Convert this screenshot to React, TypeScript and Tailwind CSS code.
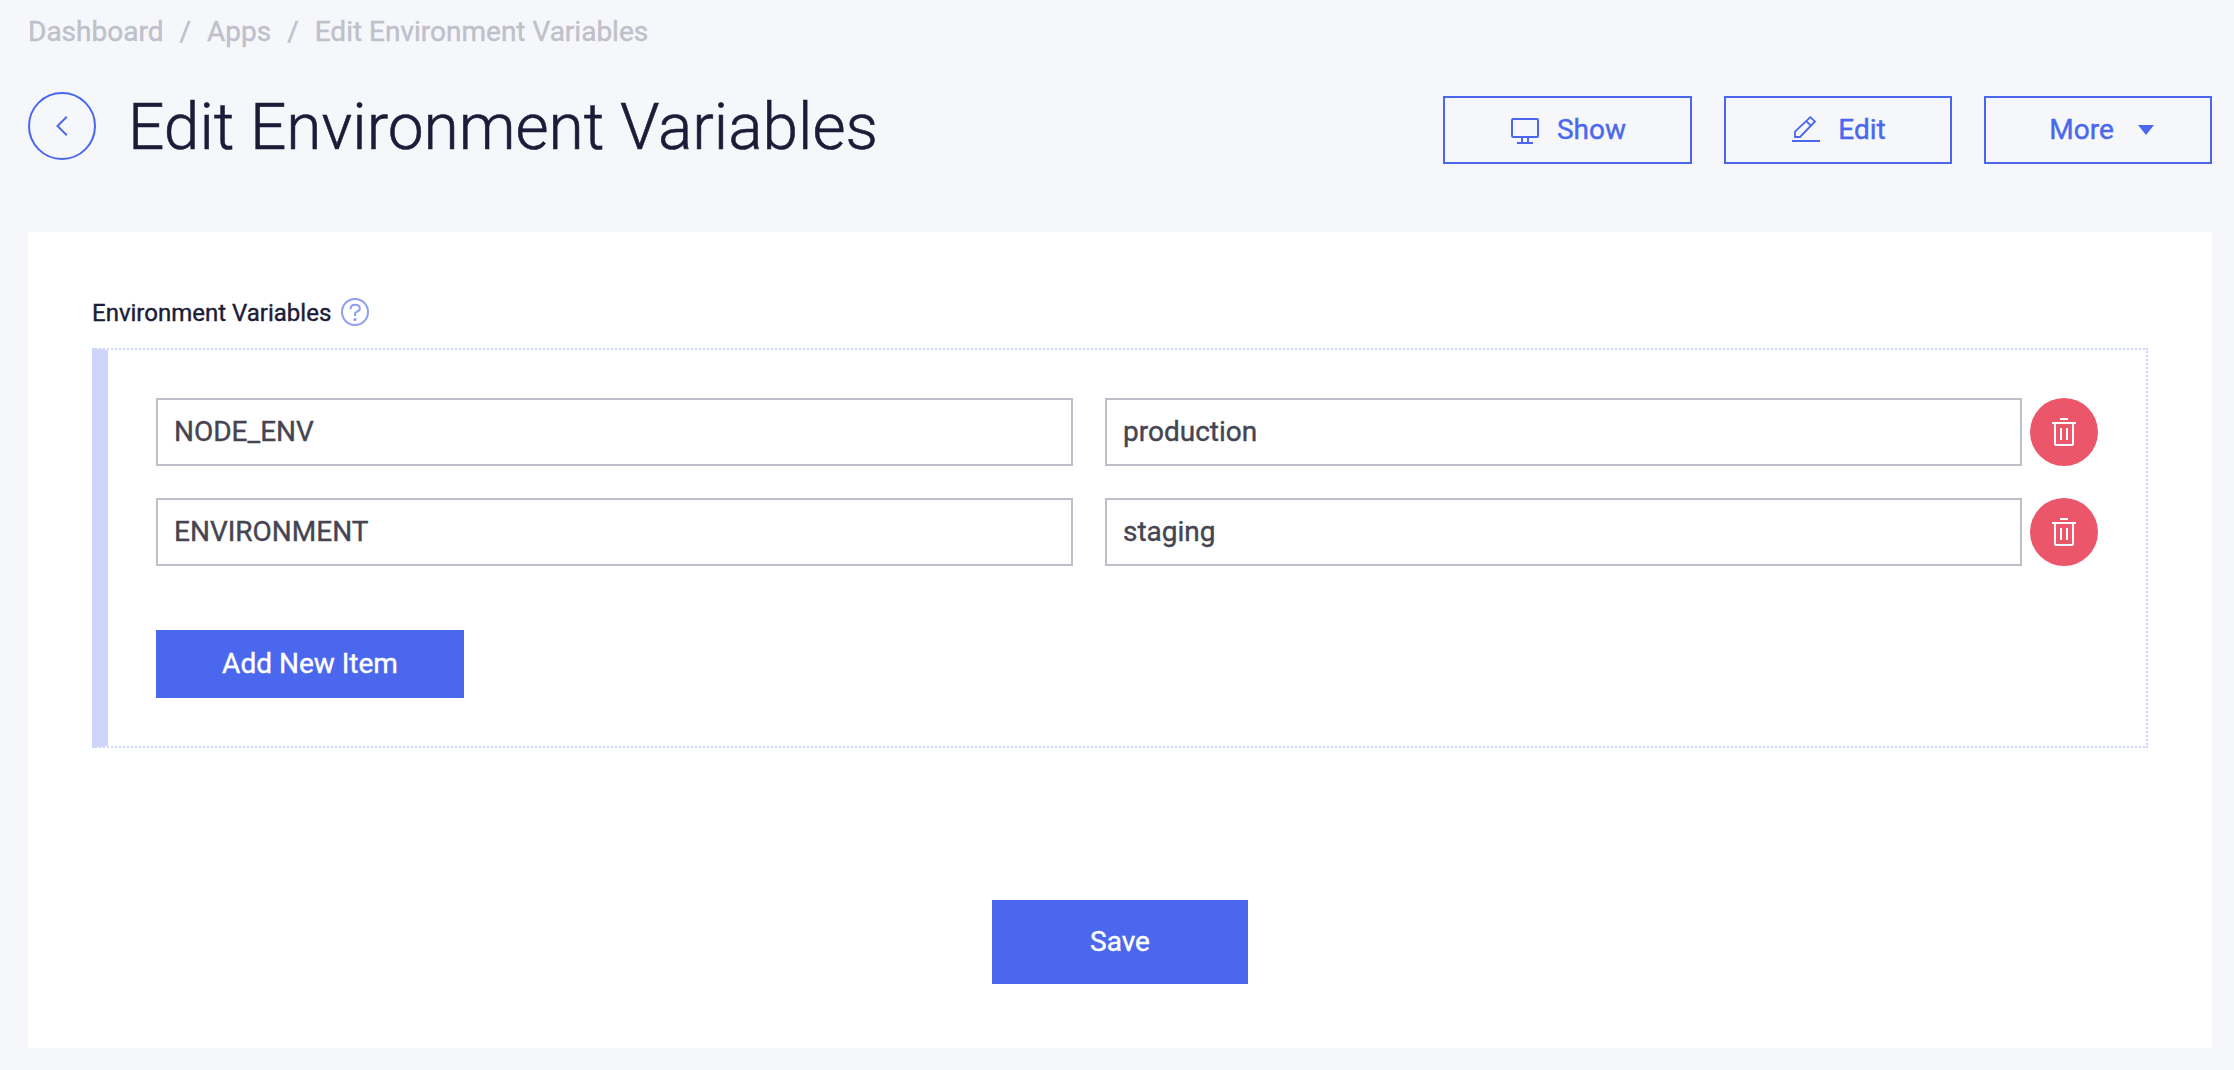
import React from 'react';

const rows = [
  { name: 'NODE_ENV', value: 'production' },
  { name: 'ENVIRONMENT', value: 'staging' },
];

function MonitorIcon() {
  return (
    <svg className="mt-0.5" width="28" height="26" viewBox="0 0 28 26" fill="none" stroke="currentColor" strokeWidth="2">
      <rect x="1" y="1" width="26" height="18" rx="1" />
      <path d="M11 19v5M17 19v5M6 25h16" />
    </svg>
  );
}

function EditIcon() {
  return (
    <svg className="mb-0.5" width="28" height="26" viewBox="0 0 28 26" fill="none" stroke="currentColor" strokeWidth="1.8">
      <path d="M3 21V15.6L18.3 1.2l4.7 4.3L8 21ZM14.2 5.2l4.6 4.5" />
      <path d="M0 25h28" strokeWidth="2" />
    </svg>
  );
}

function TrashIcon() {
  return (
    <svg width="24" height="28" viewBox="0 0 24 28" fill="none" stroke="currentColor" strokeWidth="2">
      <path d="M8 1h8M0 5h24M3 5v21q0 1 1 1h16q1 0 1-1V5M9 10v12M15 10v12" />
    </svg>
  );
}

function HelpIcon() {
  return (
    <svg width="28" height="28" viewBox="0 0 28 28" fill="none" stroke="#8f9ff2" strokeWidth="2">
      <circle cx="14" cy="14" r="13" />
      <path d="M9.6 11.2V10.5Q9.6 6.8 14.2 6.8Q18.8 6.8 18.8 10.4Q18.8 12.6 16.4 13.5Q14 14.4 14 16.4V18" />
      <circle cx="14" cy="21.6" r="1.6" fill="#8f9ff2" stroke="none" />
    </svg>
  );
}

const outline =
  'flex h-[68px] items-center justify-center border-2 border-[#4a67ee] text-[28px] leading-8 text-[#4a67ee]';
const field =
  'h-[68px] min-w-0 flex-1 border-2 border-[#bfbfc9] bg-white px-4 pb-0.5 text-[28px] text-[#454552] outline-none';

export default function App() {
  return (
    <div className="min-h-[1070px] w-[2234px] bg-[#f5f7fb] pr-[22px] pb-[22px] pl-7 font-['Roboto',sans-serif] text-[#1c1c38] [-webkit-text-stroke:0.4px]">
      <nav className="flex h-[60px] pt-4 text-[28px] leading-8 text-[#c0c0ca]">
        <span>Dashboard</span>
        <span className="mx-4">/</span>
        <span>Apps</span>
        <span className="mx-4">/</span>
        <span>Edit Environment Variables</span>
      </nav>

      <header className="flex h-[172px] items-start pt-8">
        <button className="flex size-[68px] items-center justify-center rounded-full border-2 border-[#4a67ee] text-[#4a67ee]">
          <svg width="12" height="20" viewBox="0 0 12 20" fill="none" stroke="currentColor" strokeWidth="2">
            <path d="M10.8 0.8 1.5 10l9.3 9.2" />
          </svg>
        </button>
        <h1 className="ml-8 pt-0.5 text-[64px] leading-[68px] font-light [-webkit-text-stroke:0.6px]">
          Edit Environment Variables
        </h1>
        <div className="mt-1 ml-auto flex gap-8">
          <button className={`${outline} w-[249px] gap-[18px] pl-0.5`}>
            <MonitorIcon />
            <span>Show</span>
          </button>
          <button className={`${outline} w-[228px] gap-[18px] pl-0.5`}>
            <EditIcon />
            <span>Edit</span>
          </button>
          <button className={`${outline} w-[228px] gap-6 pl-[7px]`}>
            <span>More</span>
            <svg width="16" height="10" viewBox="0 0 16 10" fill="currentColor">
              <path d="M0 0h16L8 10Z" />
            </svg>
          </button>
        </div>
      </header>

      <main className="flex h-[816px] flex-col bg-white px-16 pt-16">
        <div className="flex h-[52px] items-start gap-2.5">
          <span className="pt-px text-[24px] leading-8">Environment Variables</span>
          <span className="mt-0.5">
            <HelpIcon />
          </span>
        </div>
        <section className="h-[400px] border-2 border-l-16 border-dotted border-[#cdd5fa] px-12 pt-12 [border-left-style:solid]">
          <div className="flex flex-col gap-8">
            {rows.map((row) => (
              <div key={row.name} className="flex items-center">
                <input className={field} defaultValue={row.name} />
                <input className={`${field} ml-8`} defaultValue={row.value} />
                <button className="ml-2 flex size-[68px] items-center justify-center rounded-full bg-[#eb566a] text-white">
                  <TrashIcon />
                </button>
              </div>
            ))}
          </div>
          <button className="mt-16 h-[68px] w-[308px] bg-[#4a67ee] text-[28px] text-white">Add New Item</button>
        </section>
        <button className="mt-[152px] h-[84px] w-64 self-center bg-[#4a67ee] text-[28px] text-white">Save</button>
      </main>
    </div>
  );
}
